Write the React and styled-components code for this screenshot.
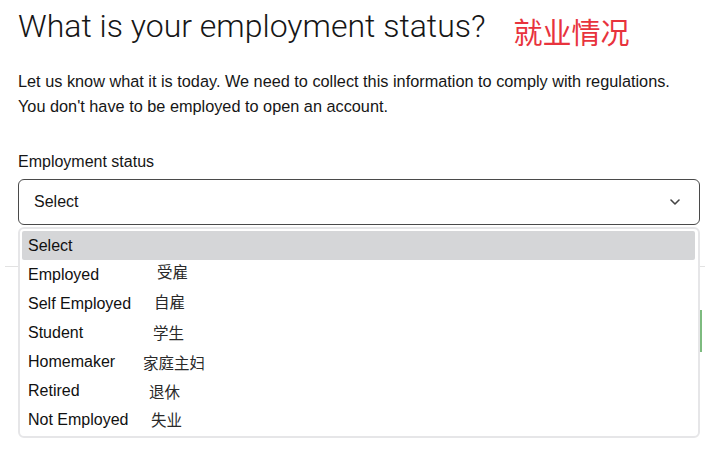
import React from "react";
import styled, { createGlobalStyle } from "styled-components";

const Global = createGlobalStyle`
  html, body { margin: 0; padding: 0; background: #ffffff; }
  body { font-family: "Liberation Sans", Arial, sans-serif; color: #161616; }
  * { box-sizing: border-box; }
`;

const Page = styled.main`
  width: 718px;
  height: 453px;
  padding: 0 18px;
  overflow: hidden;
  position: relative;
`;

const TitleRow = styled.div`
  display: flex;
  align-items: flex-start;
  gap: 28px;
`;

const Heading = styled.h1`
  margin: 0;
  padding-top: 4px;
  font-family: Roboto, "Liberation Sans", sans-serif;
  font-weight: 300;
  font-size: 32px;
  line-height: 44px;
  color: #161616;
  letter-spacing: 0;
  white-space: nowrap;
`;

const RedNote = styled.span`
  margin-top: 17px;
  font-family: "Noto Sans CJK SC", sans-serif;
  font-size: 29px;
  line-height: 29px;
  color: #e8333d;
  white-space: nowrap;
`;

const Intro = styled.p`
  margin: 21px 0 0;
  font-size: 16.3px;
  line-height: 25px;
`;

const Field = styled.div`
  margin-top: 31px;
`;

const Label = styled.label`
  display: block;
  font-size: 16px;
  line-height: 24px;
  margin-bottom: 5px;
`;

const SelectWrap = styled.div`
  position: relative;
`;

const SelectBox = styled.div`
  height: 46px;
  border: 1px solid #4a4a4a;
  border-radius: 6px;
  display: flex;
  align-items: center;
  justify-content: space-between;
  padding: 0 19px 0 15px;
  font-size: 16px;
  color: #161616;
  background: #fff;
`;

const Chevron = styled.svg`
  width: 10px;
  height: 6px;
  display: block;
`;

const Dropdown = styled.ul`
  position: absolute;
  left: 0;
  right: 0;
  top: calc(100% + 2px);
  margin: 0;
  list-style: none;
  padding: 2px 3px 2px 2px;
  background: #fff;
  border: 2px solid #e6e6e8;
  border-radius: 6px;
  z-index: 2;
`;

const Option = styled.li`
  position: relative;
  height: 29px;
  display: flex;
  align-items: center;
  padding-left: 6px;
  font-size: 16px;
  color: #111;
  border-radius: 2px;
  background: ${(p) => (p.$active ? "#d5d6d8" : "transparent")};
  white-space: nowrap;
`;

const Note = styled.span`
  position: absolute;
  left: ${(p) => p.$x}px;
  top: 50%;
  transform: translateY(calc(-50% + ${(p) => p.$dy}px));
  font-family: "Noto Sans CJK SC", sans-serif;
  font-size: 15.5px;
  line-height: 16px;
  color: #2a2a2a;
`;

const Behind = styled.div`
  margin: 41px -5px 0 -13px;
  height: 1px;
  background: #e2e2e2;
`;

const ActionRow = styled.div`
  display: flex;
  justify-content: flex-end;
  margin: 43px -2px 0 0;
`;

const GreenEdge = styled.div`
  width: 2px;
  height: 42px;
  background: #7dbb7f;
`;

const options = [
  { en: "Select", active: true },
  { en: "Employed", zh: "受雇", x: 135, dy: -4 },
  { en: "Self Employed", zh: "自雇", x: 132, dy: -3 },
  { en: "Student", zh: "学生", x: 131, dy: -1.5 },
  { en: "Homemaker", zh: "家庭主妇", x: 121, dy: -0.5 },
  { en: "Retired", zh: "退休", x: 127, dy: -0.5 },
  { en: "Not Employed", zh: "失业", x: 129, dy: -1.5 },
];

export default function App() {
  return (
    <Page>
      <Global />
      <TitleRow>
        <Heading>What is your employment status?</Heading>
        <RedNote>就业情况</RedNote>
      </TitleRow>
      <Intro>
        Let us know what it is today. We need to collect this information to comply with regulations.
        <br />
        You don't have to be employed to open an account.
      </Intro>
      <Field>
        <Label>Employment status</Label>
        <SelectWrap>
          <SelectBox>
            <span>Select</span>
            <Chevron viewBox="0 0 10 6" aria-hidden="true">
              <polyline points="1,1 5,5 9,1" fill="none" stroke="#444" strokeWidth="1.6" strokeLinecap="round" strokeLinejoin="round" />
            </Chevron>
          </SelectBox>
          <Dropdown>
            {options.map((o) => (
              <Option key={o.en} $active={o.active}>
                {o.en}
                {o.zh && (
                  <Note $x={o.x} $dy={o.dy}>
                    {o.zh}
                  </Note>
                )}
              </Option>
            ))}
          </Dropdown>
        </SelectWrap>
      </Field>
      <Behind />
      <ActionRow>
        <GreenEdge />
      </ActionRow>
    </Page>
  );
}
